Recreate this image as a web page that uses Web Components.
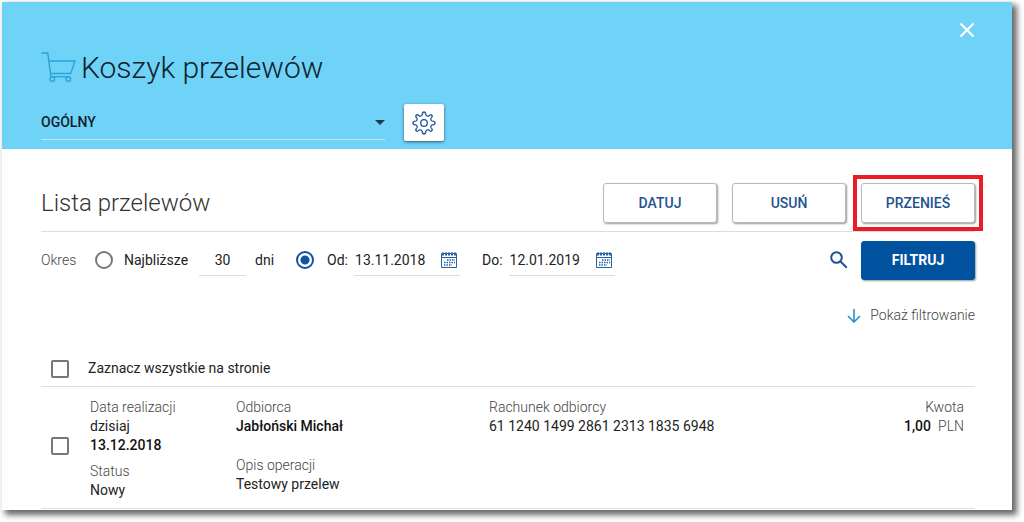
<!DOCTYPE html>
<html lang="pl">
<head>
<meta charset="utf-8">
<meta name="viewport" content="width=device-width, initial-scale=1">
<title>Koszyk przelewów</title>
<style>
body{margin:0;background:#fff;color:#222;font:14px/19px Roboto,"Noto Sans",sans-serif}
</style>
</head>
<body>
<transfer-basket></transfer-basket>
<script>
function define(name, css, html, setup){
  const tpl = document.createElement('template');
  tpl.innerHTML = `<style>*{box-sizing:border-box}${css}</style>${html}`;
  customElements.define(name, class extends HTMLElement{
    connectedCallback(){
      if(this.shadowRoot) return;
      const root = this.attachShadow({mode:'open'});
      root.append(tpl.content.cloneNode(true));
      if(setup) setup(this, root);
    }
  });
}

/* Push button; attributes: primary, marked */
define('bank-button', `
  :host{display:block;width:114px}
  :host([marked]){outline:4px solid #ed1c24;outline-offset:4px}
  button{display:block;width:100%;height:40px;padding:0;border:1px solid #b4bcc2;border-radius:3px;background:#fff;color:#1f5290;font:500 14px/19px Roboto,sans-serif;box-shadow:1px 1px 2px #0006;cursor:pointer}
  :host([primary]) button{height:39px;background:#00529f;border-color:#00529f;color:#fff;font-weight:700}
`, `<button type="button"><slot></slot></button>`);

/* Line icons, chosen by the name attribute */
const icons = {
  cart:[36,32,`<g fill="none" stroke="#2ba3d8" stroke-width="1.4"><path d="M.5 1h6.300l2.700 20.500M8 9h26l-4.300 12.500H9.500v3"/><circle cx="11.300" cy="27" r="2.300"/><circle cx="27.300" cy="27" r="2.300"/><path d="M10 24.700h17.500"/></g>`],
  close:[16,16,`<path d="M1.500 1.500l13 13M14.500 1.500l-13 13" stroke="#fff" stroke-width="2.200"/>`],
  gear:[24,24,`<g fill="none" stroke="#1f5797" stroke-width="1.300" stroke-linejoin="round"><path d="M10.2 3.600Q10.400 1 12 1T13.800 3.600Q14 4.500 15.100 5Q16.200 5.500 16.900 4.900Q18.700 3 19.800 4.200T19.100 7.100Q18.500 7.800 19 8.900Q19.500 10 20.400 10.200Q23 10.400 23 12T20.400 13.800Q19.500 14 19 15.100Q18.500 16.200 19.100 16.900Q21 18.700 19.800 19.800T16.900 19.100Q16.200 18.500 15.100 19Q14 19.500 13.800 20.400Q13.600 23 12 23T10.200 20.400Q10 19.500 8.900 19Q7.800 18.500 7.100 19.100Q5.300 21 4.200 19.800T4.900 16.900Q5.500 16.200 5 15.100Q4.500 14 3.600 13.800Q1 13.600 1 12T3.600 10.200Q4.500 10 5 8.900Q5.500 7.800 4.900 7.100Q3 5.300 4.200 4.200T7.100 4.900Q7.800 5.500 8.900 5Q10 4.500 10.200 3.600Z"/><circle cx="12" cy="12" r="3.300"/></g>`],
  calendar:[16,16,`<path d="M.5 1.500h15v14H.5zM.5 5.500h15" fill="none" stroke="#2462a4"/><path d="M1 2h14" stroke="#2462a4" stroke-width="3" stroke-dasharray="2 1"/><path d="M6 8h8M3 10.500h11M3 13h8" stroke="#2462a4" stroke-width="1.500" stroke-dasharray="1.500 1"/>`],
  search:[18,18,`<g fill="none" stroke="#1f5290" stroke-width="2"><circle cx="6.500" cy="6.500" r="5.300"/><path d="M10.500 10.500l6.300 6.300"/></g>`],
  down:[14,14,`<path d="M7 0v13M1 7l6 6 6-6" fill="none" stroke="#2b8fce" stroke-width="1.600"/>`]
};
define('line-icon', `:host{display:block;flex:none}svg{display:block}`, ``, (el, root)=>{
  const [w,h,art] = icons[el.getAttribute('name')];
  root.append(document.createRange().createContextualFragment(`<svg width="${w}" height="${h}" viewBox="0 0 ${w} ${h}" aria-hidden="true">${art}</svg>`));
});

/* Labelled date box with a calendar button */
define('date-field', `
  :host{display:flex;align-items:center;gap:6px}
  label{color:#222}
  .box{display:flex;align-items:center;width:106px;height:31px;border-bottom:1px solid #dcdcdc;justify-content:space-between;padding:0 3px 0 1px}
  input{width:80px;height:24px;padding:0;border:0;background:none;color:#222;font:14px/19px Roboto,sans-serif;outline:0}
  button{padding:0;border:0;background:none;cursor:pointer}
`, `<label for="date"></label><span class="box"><input id="date" type="text"><button type="button" aria-label="Kalendarz"><line-icon name="calendar"></line-icon></button></span>`, (el, root)=>{
  root.querySelector('label').textContent = el.getAttribute('label');
  root.querySelector('input').value = el.getAttribute('value');
});

define('tick-box', `
  :host{display:block}
  label{display:flex;align-items:center;gap:19px}
  input{appearance:none;flex:none;width:18px;height:18px;margin:0;border:2px solid #777;border-radius:2px;background:#fff}
  input:checked{background:#00529f}
`, `<label><input type="checkbox"><slot></slot></label>`, (el, root)=>{
  if(el.hasAttribute('label')) root.querySelector('input').setAttribute('aria-label', el.getAttribute('label'));
});

/* Caption over its value */
define('data-field', `
  :host{display:block}
  dl,dt,dd{margin:0}
  dt{color:#444;font-weight:300}
`, `<dl><dt></dt><dd><slot></slot></dd></dl>`, (el, root)=>{
  root.querySelector('dt').textContent = el.getAttribute('label');
});

define('basket-header', `
  :host{display:block;padding:20px 37px 8px 39px;background:#6fd3f7;color:#10222e}
  .top{display:flex;justify-content:flex-end;height:24px}
  button{cursor:pointer}
  .close{height:16px;padding:0;border:0;background:none}
  h1{display:flex;align-items:center;gap:4px;height:44px;margin:0;font-size:30px;line-height:40px;font-weight:300}
  .account{display:flex;align-items:flex-start;gap:19px;padding-top:14px}
  .pick{position:relative;width:344px}
  select{appearance:none;display:block;width:100%;height:36px;padding:2px 0 0;border:0;border-bottom:1px solid #c8e4f0;border-radius:0;background:none;color:#10222e;font:500 14px/19px Roboto,sans-serif}
  .pick::after{content:"";position:absolute;right:0;top:16px;border:5px solid transparent;border-top-color:#1d3a4c;border-bottom:0;pointer-events:none}
  .gear{display:flex;align-items:center;justify-content:center;width:40px;height:37px;padding:0;border:0;border-radius:2px;background:#fff;box-shadow:0 1px 3px #0009}
`, `
  <div class="top"><button class="close" type="button" aria-label="Zamknij"><line-icon name="close"></line-icon></button></div>
  <h1><line-icon name="cart"></line-icon>Koszyk przelewów</h1>
  <div class="account">
    <div class="pick"><select aria-label="Koszyk"><option>OGÓLNY</option></select></div>
    <button class="gear" type="button" aria-label="Ustawienia"><line-icon name="gear"></line-icon></button>
  </div>`);

define('basket-filter', `
  :host{display:block}
  .row{display:flex;align-items:center;height:56px}
  .okres{color:#444;font-weight:300;width:54px}
  label{display:flex;align-items:center}
  input[type=radio]{appearance:none;flex:none;width:18px;height:18px;margin:0;border:2px solid #777;border-radius:50%;background:#fff}
  input[type=radio]:checked{border-color:#1253a0;background:radial-gradient(circle,#1253a0 4px,#fff 5px)}
  .near{gap:11px}
  .days{width:47px;height:32px;margin:0 9px 0 11px;padding:0;border:0;border-bottom:1px solid #dcdcdc;background:none;color:#222;text-align:center;font:14px/19px Roboto,sans-serif;outline:0}
  input.range[type=radio]{margin:0 13px 0 22px}
  date-field+date-field{margin-left:22px}
  .search{margin:0 13px 0 auto;padding:0;border:0;background:none;cursor:pointer}
  .more{display:flex;justify-content:flex-end;padding:18px 0}
  a{display:flex;align-items:center;gap:9px;color:#444;font-weight:300;text-decoration:none}
`, `
  <div class="row">
    <span class="okres">Okres</span>
    <label class="near"><input type="radio" name="okres">Najbliższe</label>
    <input class="days" type="text" value="30" aria-label="Liczba dni"><span>dni</span>
    <input class="range" type="radio" name="okres" aria-label="Zakres dat" checked>
    <date-field label="Od:" value="13.11.2018"></date-field>
    <date-field label="Do:" value="12.01.2019"></date-field>
    <button class="search" type="button" aria-label="Szukaj"><line-icon name="search"></line-icon></button>
    <bank-button primary>FILTRUJ</bank-button>
  </div>
  <div class="more"><a href="#"><line-icon name="down"></line-icon>Pokaż filtrowanie</a></div>`);

define('transfer-row', `
  :host{display:grid;grid-template-columns:49px 146px 253px 1fr auto;padding:11px 11px 8px 0;border-bottom:1px solid #ddd}
  tick-box{align-self:center;padding:0 0 6px 10px}
  .stack{display:grid;align-content:start;gap:7px}
  .wide{gap:20px}
  .sum{text-align:right}
  b{font-weight:500;color:#111}
  i{font-style:normal;font-weight:300;color:#444;margin-left:7px}
`, `
  <tick-box label="Zaznacz przelew"></tick-box>
  <div class="stack"><data-field label="Data realizacji">dzisiaj<br><b>13.12.2018</b></data-field><data-field label="Status">Nowy</data-field></div>
  <div class="stack wide"><data-field label="Odbiorca"><b>Jabłoński Michał</b></data-field><data-field label="Opis operacji">Testowy przelew</data-field></div>
  <data-field label="Rachunek odbiorcy">61 1240 1499 2861 2313 1835 6948</data-field>
  <data-field class="sum" label="Kwota"><b>1,00</b><i>PLN</i></data-field>`);

define('transfer-basket', `
  :host{display:block;margin:2px 12px 12px 2px;background:#fff;box-shadow:4px 4px 6px 1px #0009}
  .body{padding:26px 37px 1px 39px}
  .head{display:flex;align-items:center;gap:15px;padding:8px 0;border-bottom:1px solid #ddd}
  h2{flex:1;margin:0;color:#333;font-size:24px;line-height:32px;font-weight:300}
  .all{padding:16px 0 8px 10px;border-bottom:1px solid #ddd}
`, `
  <basket-header></basket-header>
  <div class="body">
    <div class="head"><h2>Lista przelewów</h2><bank-button>DATUJ</bank-button><bank-button>USUŃ</bank-button><bank-button marked>PRZENIEŚ</bank-button></div>
    <basket-filter></basket-filter>
    <tick-box class="all">Zaznacz wszystkie na stronie</tick-box>
    <transfer-row></transfer-row>
  </div>`);
</script>
</body>
</html>
